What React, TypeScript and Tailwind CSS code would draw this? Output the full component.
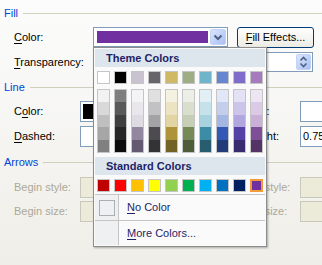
import React from "react";

const themeTop = [
  "#ffffff",
  "#000000",
  "#c8c3cf",
  "#67646a",
  "#cfb866",
  "#9eae84",
  "#6fb4cb",
  "#6785d0",
  "#7f6bc9",
  "#a67bbd",
];

const themeShades = [
  ["#f2f2f2", "#d9d9d9", "#bfbfbf", "#a6a6a6", "#808080"],
  ["#7f7f7f", "#595959", "#3f3f3f", "#262626", "#0d0d0d"],
  ["#f4f3f5", "#e9e7ec", "#dedbe2", "#92879f", "#635970"],
  ["#e0e0e1", "#c2c1c3", "#a3a2a5", "#4d4b4f", "#333235"],
  ["#f5f1e0", "#ece3c2", "#e2d4a3", "#ad933a", "#736226"],
  ["#ebefe6", "#d8dfcd", "#c5cfb5", "#758a57", "#4e5c3a"],
  ["#e2f0f5", "#c5e1ea", "#a9d2e0", "#3c8ca6", "#285d6f"],
  ["#e1e7f6", "#c2ceec", "#a4b6e3", "#3358b5", "#223b79"],
  ["#e5e1f4", "#ccc4e9", "#b2a6df", "#5540a5", "#382b6e"],
  ["#ede5f2", "#dbcae5", "#cab0d7", "#7e4e99", "#543466"],
];

const standardColors = [
  "#c00000",
  "#ff0000",
  "#ffc000",
  "#ffff00",
  "#92d050",
  "#00b050",
  "#00b0f0",
  "#0070c0",
  "#002060",
  "#7030a0",
];

function Label({
  text,
  u,
  width,
  disabled,
}: {
  text: string;
  u?: number;
  width: string;
  disabled?: boolean;
}) {
  return (
    <span
      className={`${width} shrink-0 whitespace-nowrap ${
        disabled ? "text-[#aca899]" : "text-black"
      }`}
    >
      {u === undefined ? (
        text
      ) : (
        <>
          {text.slice(0, u)}
          <span className="underline underline-offset-2">{text[u]}</span>
          {text.slice(u + 1)}
        </>
      )}
    </span>
  );
}

function SectionHeader({ title }: { title: string }) {
  return (
    <div className="flex items-center h-[14px]">
      <span className="text-[#0046d5]">{title}</span>
      <div className="flex-1 ml-[5px] border-t border-[#d0d0bf]" />
    </div>
  );
}

function DropButton() {
  return (
    <div className="w-[16px] h-[16px] shrink-0 rounded-[2px] border border-[#c3d3f8] bg-gradient-to-br from-[#dbe5fd] to-[#a9bff2] flex items-center justify-center">
      <svg width="10" height="7" viewBox="0 0 10 7">
        <path
          d="M1.5 1.5 L5 5 L8.5 1.5"
          fill="none"
          stroke="#4d6185"
          strokeWidth="2"
        />
      </svg>
    </div>
  );
}

function Box({
  width,
  disabled,
  children,
}: {
  width: string;
  disabled?: boolean;
  children?: React.ReactNode;
}) {
  return (
    <div
      className={`${width} h-[21px] shrink-0 border flex items-center ${
        disabled
          ? "bg-[#ecead9] border-[#cac8bb]"
          : "bg-white border-[#7f9db9]"
      }`}
    >
      {children}
    </div>
  );
}

function ColorPicker() {
  return (
    <div className="absolute left-[93px] top-[47px] w-[174px] h-[200px] border border-[#8d8d8d] bg-[#fafafa] p-[1px] flex flex-col shadow-[1px_1px_2px_rgba(0,0,0,0.3)]">
      <div className="h-[18px] shrink-0 bg-[#dde6ed] pl-[11px] flex items-center font-bold text-[#1f1f66]">
        Theme Colors
      </div>
      <div className="mt-[4px] pl-[2px] flex gap-[4px]">
        {themeTop.map((c) => (
          <div
            key={c}
            className="w-[13px] h-[13px] border border-[#c5c5c5]"
            style={{ backgroundColor: c }}
          />
        ))}
      </div>
      <div className="mt-[5px] pl-[2px] flex gap-[4px]">
        {themeShades.map((col, i) => (
          <div
            key={i}
            className="w-[13px] h-[64px] border border-[#c5c5c5] flex flex-col"
          >
            {col.map((c) => (
              <div key={c} className="flex-1" style={{ backgroundColor: c }} />
            ))}
          </div>
        ))}
      </div>
      <div className="mt-[4px] h-[18px] shrink-0 bg-[#dde6ed] pl-[11px] flex items-center font-bold text-[#1f1f66]">
        Standard Colors
      </div>
      <div className="mt-[4px] pl-[2px] flex gap-[4px]">
        {standardColors.map((c, i) =>
          i === standardColors.length - 1 ? (
            <div
              key={c}
              className="w-[13px] h-[13px] border-2 border-[#f39a3a]"
              style={{ backgroundColor: c }}
            />
          ) : (
            <div
              key={c}
              className="w-[13px] h-[13px] border border-[#c5c5c5]"
              style={{ backgroundColor: c }}
            />
          )
        )}
      </div>
      <div className="mt-[2px] h-px shrink-0 bg-[#c5c5c5]" />
      <div className="h-[25px] shrink-0 flex">
        <div className="w-[24px] bg-[#eef0f2] flex items-center justify-center border-r border-[#c5c5c5]">
          <div className="w-[16px] h-[16px] border border-[#a9b0b4] bg-[#eef0f2]" />
        </div>
        <div className="pl-[8px] flex items-center text-[#1f1f66]">
          <span className="underline underline-offset-2">N</span>o Color
        </div>
      </div>
      <div className="h-px shrink-0 bg-[#c5c5c5]" />
      <div className="flex-1 flex">
        <div className="w-[24px] bg-[#eef0f2] border-r border-[#c5c5c5]" />
        <div className="pl-[8px] flex items-center text-[#1f1f66]">
          <span className="underline underline-offset-2">M</span>ore Colors...
        </div>
      </div>
    </div>
  );
}

export default function App() {
  return (
    <div
      className="relative w-[322px] h-[265px] overflow-hidden bg-gradient-to-b from-[#fcfcfc] to-[#efeee8] pl-[4px] text-[11px] leading-none"
      style={{ fontFamily: '"Liberation Sans", Arial, sans-serif' }}
    >
      <div className="pt-[6px]">
        <SectionHeader title="Fill" />
      </div>

      <div className="mt-[6px] h-[22px] flex items-center pl-[10px]">
        <Label text="Color:" u={0} width="w-[79px]" />
        <div className="w-[135px] h-[20px] shrink-0 border border-[#7f9db9] bg-white flex items-center px-[1px]">
          <div className="ml-[2px] w-[111px] h-[12px] bg-[#7030a0]" />
          <div className="ml-auto">
            <DropButton />
          </div>
        </div>
        <button className="ml-[9px] w-[77px] h-[21px] shrink-0 rounded-[3px] border border-[#003c74] bg-gradient-to-b from-[#ffffff] to-[#ecebe4] text-black">
          <span className="underline underline-offset-2">F</span>ill Effects...
        </button>
      </div>

      <div className="mt-[3px] h-[22px] flex items-center pl-[10px]">
        <Label text="Transparency:" u={0} width="w-[79px]" />
        <div className="ml-[144px] w-[76px] h-[20px] shrink-0 border border-[#7f9db9] bg-white flex items-center justify-end pr-[1px]">
          <div className="w-[15px] h-[16px] rounded-[2px] border border-[#c3d3f8] bg-gradient-to-br from-[#dbe5fd] to-[#a9bff2] flex items-center justify-center">
            <svg width="9" height="12" viewBox="0 0 9 12">
              <path
                d="M1.5 4.5 L4.5 1.5 L7.5 4.5 M1.5 7.5 L4.5 10.5 L7.5 7.5"
                fill="none"
                stroke="#4d6185"
                strokeWidth="1.6"
              />
            </svg>
          </div>
        </div>
      </div>

      <div className="mt-[7px]">
        <SectionHeader title="Line" />
      </div>

      <div className="mt-[6px] h-[22px] flex items-center pl-[10px]">
        <Label text="Color:" u={1} width="w-[66px]" />
        <Box width="w-[135px]">
          <div className="ml-[2px] w-[110px] h-[15px] bg-black" />
        </Box>
        <div className="ml-[27px] flex items-center">
          <Label text="Style:" u={0} width="w-[58px]" />
          <Box width="w-[60px]" />
        </div>
      </div>

      <div className="mt-[3px] h-[22px] flex items-center pl-[10px]">
        <Label text="Dashed:" u={0} width="w-[66px]" />
        <Box width="w-[135px]" />
        <div className="ml-[27px] flex items-center">
          <Label text="Weight:" width="w-[58px]" />
          <Box width="w-[60px]">
            <span className="pl-[2px]">0.75 pt</span>
          </Box>
        </div>
      </div>

      <div className="mt-[8px]">
        <SectionHeader title="Arrows" />
      </div>

      <div className="mt-[7px] h-[22px] flex items-center pl-[10px]">
        <Label text="Begin style:" width="w-[66px]" disabled />
        <Box width="w-[135px]" disabled />
        <div className="ml-[27px] flex items-center">
          <Label text="End style:" width="w-[58px]" disabled />
          <Box width="w-[60px]" disabled />
        </div>
      </div>

      <div className="mt-[2px] h-[22px] flex items-center pl-[10px]">
        <Label text="Begin size:" width="w-[66px]" disabled />
        <Box width="w-[135px]" disabled />
        <div className="ml-[27px] flex items-center">
          <Label text="End size:" width="w-[58px]" disabled />
          <Box width="w-[60px]" disabled />
        </div>
      </div>

      <ColorPicker />
    </div>
  );
}
